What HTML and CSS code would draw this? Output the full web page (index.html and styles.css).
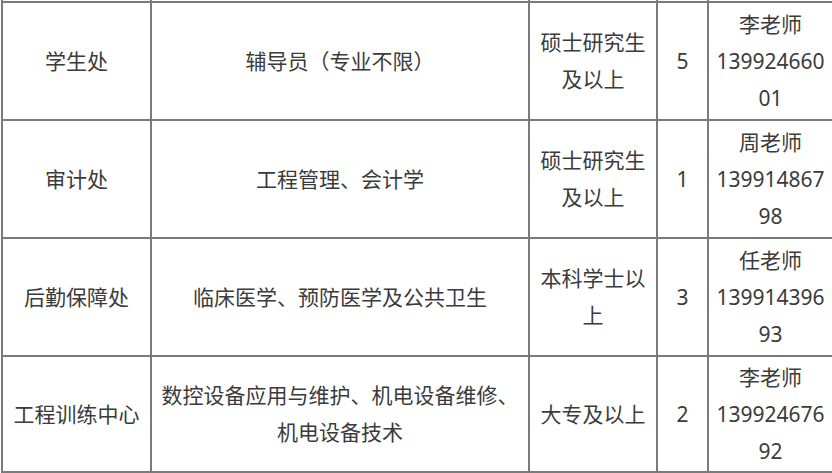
FILE: index.html
```html
<!DOCTYPE html>
<html lang="zh-CN">
<head>
<meta charset="utf-8">
<title>招聘岗位</title>
<link rel="stylesheet" href="styles.css">
</head>
<body>
<table class="jobs">
  <colgroup>
    <col class="c-dept">
    <col class="c-major">
    <col class="c-degree">
    <col class="c-num">
    <col class="c-contact">
  </colgroup>
  <tbody>
    <tr class="stub"><td></td><td></td><td></td><td></td><td></td></tr>
    <tr class="row">
      <td>学生处</td>
      <td>辅导员（专业不限）</td>
      <td>硕士研究生及以上</td>
      <td>5</td>
      <td class="contact">李老师<br>13992466001</td>
    </tr>
    <tr class="row">
      <td>审计处</td>
      <td>工程管理、会计学</td>
      <td>硕士研究生及以上</td>
      <td>1</td>
      <td class="contact">周老师<br>13991486798</td>
    </tr>
    <tr class="row">
      <td>后勤保障处</td>
      <td>临床医学、预防医学及公共卫生</td>
      <td>本科学士以上</td>
      <td>3</td>
      <td class="contact">任老师<br>13991439693</td>
    </tr>
    <tr class="row last">
      <td>工程训练中心</td>
      <td>数控设备应用与维护、机电设备维修、机电设备技术</td>
      <td>大专及以上</td>
      <td>2</td>
      <td class="contact">李老师<br>13992467692</td>
    </tr>
  </tbody>
</table>
</body>
</html>
```

FILE: styles.css
```css
html, body {
  margin: 0;
  padding: 0;
  background: #ffffff;
  overflow: hidden;
}

.jobs {
  margin-left: 1px;
  width: 831px;
  table-layout: fixed;
  border-collapse: collapse;
  font-family: "Noto Sans", "Noto Sans CJK SC", sans-serif;
  font-size: 21px;
  line-height: 37px;
  color: #3b3b3b;
}

.c-dept { width: 149px; }
.c-major { width: 378px; }
.c-degree { width: 128px; }
.c-num { width: 51px; }
.c-contact { width: 125px; }

.jobs td {
  border: 2px solid #7a7a7a;
  text-align: center;
  vertical-align: middle;
  padding: 0 6px;
  word-break: break-all;
}

.stub td {
  border-top: none;
  height: 1px;
  padding: 0;
  line-height: 0;
}

.row td {
  height: 116px;
}

.row.last td {
  height: 114px;
}

.contact {
  line-height: 37px;
}
```
